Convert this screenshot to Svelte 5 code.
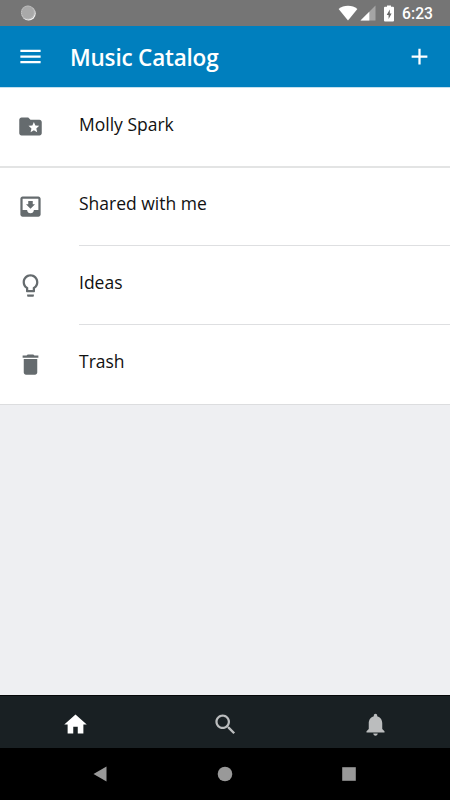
<script>
  const folders = [
    {
      label: 'Molly Spark',
      divider: 'full',
      icon: 'M20 6h-8l-2-2H4c-1.1 0-1.99.9-1.99 2L2 18c0 1.1.9 2 2 2h16c1.1 0 2-.9 2-2V8c0-1.1-.9-2-2-2zm-2.06 11L15 15.28 12.06 17l.78-3.33-2.59-2.24 3.41-.29L15 8l1.34 3.14 3.41.29-2.59 2.24.78 3.33z'
    },
    {
      label: 'Shared with me',
      divider: 'inset',
      icon: 'M19 3H4.99c-1.11 0-1.98.9-1.98 2L3 19c0 1.1.88 2 1.99 2H19c1.1 0 2-.9 2-2V5c0-1.1-.9-2-2-2zm0 12h-4c0 1.66-1.35 3-3 3s-3-1.34-3-3H4.99V5H19v10zm-3-5h-2V7h-4v3H8l4 4 4-4z'
    },
    {
      label: 'Ideas',
      divider: 'inset',
      icon: 'M9 21c0 .55.45 1 1 1h4c.55 0 1-.45 1-1v-1H9v1zm3-19C8.14 2 5 5.14 5 9c0 2.38 1.19 4.47 3 5.74V17c0 .55.45 1 1 1h6c.55 0 1-.45 1-1v-2.26c1.81-1.27 3-3.36 3-5.74 0-3.86-3.14-7-7-7zm2.85 11.1l-.85.6V16h-4v-2.3l-.85-.6C7.8 12.16 7 10.63 7 9c0-2.76 2.24-5 5-5s5 2.24 5 5c0 1.63-.8 3.16-2.15 4.1z'
    },
    {
      label: 'Trash',
      divider: 'full',
      icon: 'M6 19c0 1.1.9 2 2 2h8c1.1 0 2-.9 2-2V7H6v12zM19 4h-3.5l-1-1h-5l-1 1H5v2h14V4z'
    }
  ];

  const tabs = [
    { id: 'home', label: 'Home', icon: 'M10 20v-6h4v6h5v-8h3L12 3 2 12h3v8z' },
    {
      id: 'search',
      label: 'Search',
      icon: 'M15.5 14h-.79l-.28-.27C15.41 12.59 16 11.11 16 9.5 16 5.91 13.09 3 9.5 3S3 5.91 3 9.5 5.91 16 9.5 16c1.61 0 3.09-.59 4.23-1.57l.27.28v.79l5 4.99L20.49 19l-4.99-5zm-6 0C7.01 14 5 11.99 5 9.5S7.01 5 9.5 5 14 7.01 14 9.5 11.99 14 9.5 14z'
    },
    {
      id: 'alerts',
      label: 'Notifications',
      icon: 'M12 22c1.1 0 2-.9 2-2h-4c0 1.1.89 2 2 2zm6-6v-5c0-3.07-1.64-5.64-4.5-6.32V4c0-.83-.67-1.5-1.5-1.5s-1.5.67-1.5 1.5v.68C7.63 5.36 6 7.92 6 11v5l-2 2v1h16v-1l-2-2z'
    }
  ];

  let activeTab = $state('home');
</script>

<div class="screen">
  <div class="status-bar">
    <svg class="sync" viewBox="0 0 16 16">
      <circle cx="8.6" cy="8.5" r="7.1" fill="#f4f4f4" />
      <circle cx="7.9" cy="7.5" r="7" fill="#a9a9a9" />
      <circle cx="7.9" cy="7.5" r="6.4" fill="none" stroke="#c9c9c9" stroke-dasharray="1 1" />
    </svg>
    <svg class="wifi" viewBox="0 0 20 16">
      <path d="M10 15.5L.6 4Q4.6.8 10 .8T19.4 4z" fill="#fff" />
    </svg>
    <svg class="signal" viewBox="0 0 16 16">
      <path d="M.5 15.5l15-15v15z" fill="#a5a5a5" />
      <path d="M.5 15.5L9.3 6.7v8.8z" fill="#fff" />
    </svg>
    <svg class="battery" viewBox="0 0 10 17">
      <path d="M3 .5h4v1.3h2q1 0 1 1v12.7q0 1-1 1H1q-1 0-1-1V2.8q0-1 1-1h2z" fill="#fff" />
      <path d="M5.8 4.5L2.7 10h1.9v4L7.6 8.6H5.8z" fill="#666" />
    </svg>
    <span class="time">6:23</span>
  </div>

  <header class="app-bar">
    <button class="icon-button" aria-label="Menu">
      <svg class="icon" viewBox="0 0 24 24"><path d="M3 18h18v-2H3v2zm0-5h18v-2H3v2zm0-7v2h18V6H3z" /></svg>
    </button>
    <h1>Music Catalog</h1>
    <button class="icon-button" aria-label="Add">
      <svg class="icon" viewBox="0 0 24 24"><path d="M19 13h-6v6h-2v-6H5v-2h6V5h2v6h6v2z" /></svg>
    </button>
  </header>

  <main>
    <ul class="folders">
      {#each folders as folder}
        <li class="folder" class:full={folder.divider === 'full'}>
          <svg class="icon" viewBox="0 0 24 24"><path d={folder.icon} /></svg>
          <span class="label" class:inset={folder.divider === 'inset'}>{folder.label}</span>
        </li>
      {/each}
    </ul>
  </main>

  <nav class="tabs">
    {#each tabs as tab}
      <button
        class="tab"
        class:active={activeTab === tab.id}
        aria-label={tab.label}
        onclick={() => (activeTab = tab.id)}
      >
        <svg class="icon" viewBox="0 0 24 24"><path d={tab.icon} /></svg>
      </button>
    {/each}
  </nav>

  <div class="system-nav">
    <svg viewBox="0 0 16 16"><path d="M1.5 8L14.5.6v14.8z" /></svg>
    <svg viewBox="0 0 16 16"><circle cx="8" cy="8" r="7.3" /></svg>
    <svg viewBox="0 0 16 16"><path d="M1.2 1.2h13.6v13.6H1.2z" /></svg>
  </div>
</div>

<style>
  :global(body) {
    margin: 0;
  }

  .screen {
    display: flex;
    flex-direction: column;
    width: 450px;
    height: 800px;
    overflow: hidden;
    background: #eeeff2;
    font-family: 'Open Sans', 'Noto Sans', sans-serif;
  }

  svg {
    display: block;
    flex: none;
  }

  button {
    padding: 0;
    border: none;
    background: none;
    color: inherit;
    cursor: pointer;
  }

  .icon {
    width: 27px;
    height: 27px;
    fill: currentColor;
  }

  .status-bar {
    display: flex;
    align-items: center;
    box-sizing: border-box;
    height: 26px;
    padding: 0 17px 0 20px;
    background: #757575;
    color: #fff;
  }

  .sync {
    width: 16px;
    height: 16px;
    margin-right: auto;
  }

  .wifi {
    width: 20px;
    height: 16px;
    margin-right: 2px;
  }

  .signal {
    width: 16px;
    height: 16px;
    margin-right: 8px;
  }

  .battery {
    width: 10px;
    height: 17px;
    margin-right: 8px;
  }

  .time {
    font-family: Roboto, sans-serif;
    font-size: 15.7px;
    font-weight: 500;
    line-height: 26px;
    padding-top: 1px;
  }

  .app-bar {
    display: flex;
    align-items: center;
    box-sizing: border-box;
    height: 62px;
    padding: 0 17px;
    border-bottom: 1px solid #c2e0ef;
    background: #007fbe;
    background-clip: padding-box;
    color: #fff;
  }

  h1 {
    flex: 1;
    margin: 0;
    padding: 2px 0 0 26px;
    font-size: 22.5px;
    font-weight: 600;
    line-height: 30px;
    letter-spacing: -0.2px;
  }

  main {
    flex: 1;
  }

  .folders {
    margin: 0;
    padding: 0;
    list-style: none;
    background: #fff;
  }

  .folder {
    display: flex;
    align-items: center;
    box-sizing: border-box;
    height: 79px;
    padding-left: 17px;
    color: #656b6e;
  }

  .folder.full {
    height: 80px;
    border-bottom: 1px solid #dcdddf;
  }

  .folder:first-child {
    border-bottom-width: 2px;
    border-color: #e3e4e4;
  }

  .folder:nth-child(2) {
    height: 78px;
  }

  .folder:nth-child(-n + 2) .icon {
    margin-bottom: 1px;
  }

  .label {
    flex: 1;
    align-self: stretch;
    box-sizing: border-box;
    margin-left: 35px;
    padding-top: 24px;
    color: #111;
    font-size: 17.5px;
    line-height: 24px;
  }

  .folder:nth-child(2) .label {
    padding-top: 23px;
  }

  .label.inset {
    border-bottom: 1px solid #dedfe1;
  }

  .tabs {
    display: grid;
    grid-template-columns: repeat(3, 1fr);
    box-sizing: border-box;
    height: 53px;
    padding-top: 5px;
    border-top: 1px solid #050708;
    background: #192023;
  }

  .tab {
    display: flex;
    align-items: center;
    justify-content: center;
    color: #bbbdbe;
  }

  .tab.active {
    color: #fff;
  }

  .system-nav {
    display: flex;
    justify-content: space-between;
    align-items: center;
    box-sizing: border-box;
    height: 52px;
    padding: 0 93px 0 92px;
    background: #000;
  }

  .system-nav svg {
    width: 16px;
    height: 16px;
    fill: #999;
  }
</style>
